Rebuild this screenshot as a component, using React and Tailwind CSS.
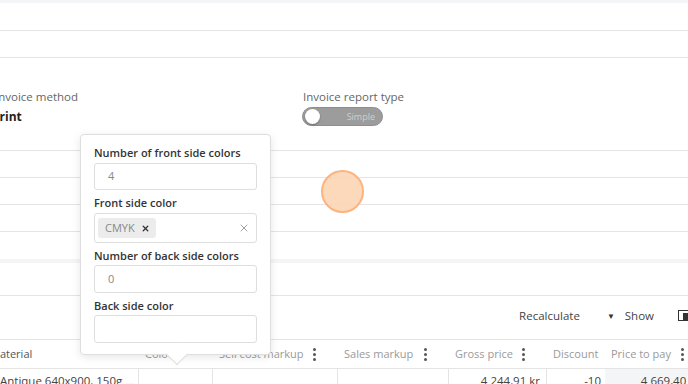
import { X } from "lucide-react";

const Dots = () => (
  <span className="flex flex-col gap-[2px] items-center w-[4px]">
    <span className="w-[3px] h-[3px] rounded-full bg-[#555]" />
    <span className="w-[3px] h-[3px] rounded-full bg-[#555]" />
    <span className="w-[3px] h-[3px] rounded-full bg-[#555]" />
  </span>
);

const Row = () => <div className="h-[27px] border-b border-[#e4e4e4]" />;

const headers = [
  { label: "Material", w: "w-[152px]", dots: false, pad: "pl-[3px]", color: "text-[#555]" },
  { label: "Color", w: "w-[74px]", dots: false },
  { label: "Sell cost markup", w: "w-[125px]", dots: true },
  { label: "Sales markup", w: "w-[111px]", dots: true },
  { label: "Gross price", w: "w-[98px]", dots: true },
  { label: "Discount", w: "w-[58px]", dots: false },
  { label: "Price to pay", w: "w-[101px]", dots: true },
];

const App = () => {
  return (
    <div className="relative w-[688px] h-[384px] overflow-hidden bg-white text-[#333] font-['Open_Sans',sans-serif] text-[11px]">
      <div className="h-[3px] bg-[#f4f5f7]" />
      <div className="h-[28px] border-b border-[#e4e4e4]" />
      <Row />

      {/* invoice section */}
      <div className="h-[93px] border-b border-[#e4e4e4] flex pt-[32px]">
        <div className="w-[303px]">
          <div className="-ml-[5px] h-[14px] leading-[14px] text-[#666] text-[11.5px]">
            Invoice method
          </div>
          <div className="-ml-[8px] mt-[5px] h-[16px] leading-[16px] font-bold text-[12px] text-[#222]">
            Print
          </div>
        </div>
        <div>
          <div className="h-[14px] leading-[14px] text-[#666] text-[11.5px]">
            Invoice report type
          </div>
          <div className="-ml-[1px] mt-[3px] w-[81px] h-[19px] rounded-full bg-[#9c9c9c] border border-[#8e8e8e] flex items-center justify-between pl-[2px] pr-[7px]">
            <span className="w-[15px] h-[15px] rounded-full bg-white shadow-[0_1px_2px_rgba(0,0,0,0.3)]" />
            <span className="text-[9px] text-[#cfcfcf]">Simple</span>
          </div>
        </div>
      </div>

      <Row />
      <Row />
      <Row />
      <div className="h-[27px]" />
      <div className="h-[4px] bg-[#f4f5f7]" />
      <div className="h-[33px] border-b border-[#e4e4e4]" />

      {/* toolbar */}
      <div className="h-[44px] border-b border-[#e4e4e4] flex items-center justify-end pb-[4px] text-[11.5px] text-[#444]">
        <span className="mr-[27px]">Recalculate</span>
        <span className="text-[8px] mr-[10px] text-[#333]">▼</span>
        <span className="mr-[24px]">Show</span>
        <svg width="12" height="11" viewBox="0 0 12 11" className="-mr-[2px]">
          <rect x="0.5" y="0.5" width="11" height="10" fill="none" stroke="#333" />
          <rect x="5" y="3" width="6" height="7" fill="#333" />
        </svg>
      </div>

      {/* table header */}
      <div className="h-[29px] border-b border-[#e4e4e4] flex -ml-[13px] text-[#9a9a9a]">
        {headers.map((h) => (
          <div
            key={h.label}
            className={`${h.w} shrink-0 flex items-center justify-between ${h.pad || "pl-[6px]"} pr-[22px] ${h.color || ""}`}
          >
            <span className="whitespace-nowrap">{h.label}</span>
            {h.dots && <Dots />}
          </div>
        ))}
      </div>

      {/* data row */}
      <div className="h-[20px] flex -ml-[13px] text-[#444] text-[11.5px]">
        <div className="w-[152px] shrink-0 pl-[13px] pt-[3px] whitespace-nowrap overflow-hidden border-r border-[#e4e4e4]">
          Antique 640x900, 150g <span className="text-[#ccc]">…</span>
        </div>
        <div className="w-[74px] shrink-0 border-r border-[#e4e4e4]" />
        <div className="w-[125px] shrink-0 border-r border-[#e4e4e4]" />
        <div className="w-[111px] shrink-0 border-r border-[#e4e4e4]" />
        <div className="w-[98px] shrink-0 border-r border-[#e4e4e4] pt-[3px] pr-[6px] text-right whitespace-nowrap">
          4 244,91 kr
        </div>
        <div className="w-[58px] shrink-0 pt-[3px] pr-[4px] text-right">-10</div>
        <div className="w-[101px] shrink-0 bg-[#f4f5f7] pt-[3px] pr-[6px] text-right whitespace-nowrap">
          4 669,40 kr
        </div>
      </div>

      {/* popover */}
      <div className="absolute left-[80px] top-[134px] w-[191px] bg-white border border-[#dedede] rounded-[4px] shadow-[0_2px_8px_rgba(0,0,0,0.10)] px-[13px] pt-[11px] pb-[11px]">
        <div className="h-[14px] leading-[14px] font-semibold text-[#333]">
          Number of front side colors
        </div>
        <div className="mt-[3px] h-[27px] border border-[#dedede] rounded-[3px] flex items-center pl-[13px] text-[#888]">
          4
        </div>
        <div className="mt-[6px] h-[14px] leading-[14px] font-semibold text-[#333]">
          Front side color
        </div>
        <div className="mt-[3px] h-[30px] border border-[#dedede] rounded-[3px] flex items-center justify-between pl-[3px] pr-[6px]">
          <span className="h-[20px] flex items-center gap-[6px] bg-[#ececec] rounded-[3px] pl-[7px] pr-[6px] text-[#888]">
            CMYK
            <X size={9} strokeWidth={3.5} color="#333" />
          </span>
          <X size={12} strokeWidth={1.6} color="#888" />
        </div>
        <div className="mt-[6px] h-[14px] leading-[14px] font-semibold text-[#333]">
          Number of back side colors
        </div>
        <div className="mt-[2px] h-[28px] border border-[#dedede] rounded-[3px] flex items-center pl-[13px] text-[#888]">
          0
        </div>
        <div className="mt-[6px] h-[14px] leading-[14px] font-semibold text-[#333]">
          Back side color
        </div>
        <div className="mt-[2px] h-[28px] border border-[#dedede] rounded-[3px]" />
        <div className="absolute -bottom-[8px] left-[88px] w-[16px] h-[16px] rotate-45 bg-white border-r border-b border-[#dedede]" />
      </div>

      {/* cursor highlight */}
      <div className="absolute left-[321px] top-[170px] w-[43px] h-[43px] rounded-full bg-[#fdd5b5]/90 border-2 border-[#fbb47f]" />
    </div>
  );
};

export default App;
